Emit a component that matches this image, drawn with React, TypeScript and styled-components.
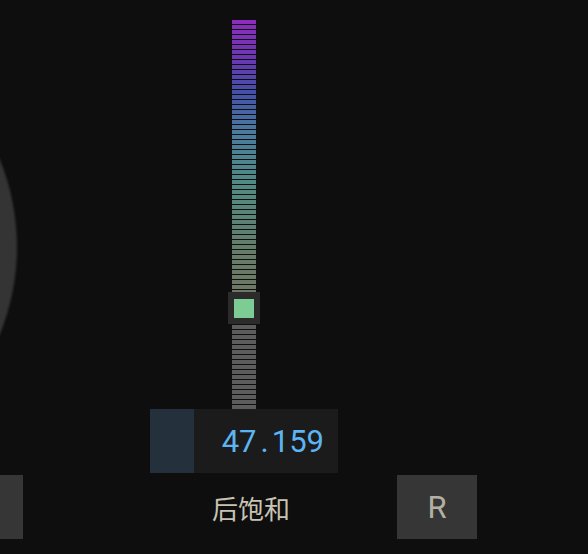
import React from "react";
import styled, { createGlobalStyle } from "styled-components";

const GlobalStyle = createGlobalStyle`
  html, body {
    margin: 0;
    padding: 0;
    background: #0e0e0e;
    overflow: hidden;
  }
`;

const BAR_COUNT = 78;
const ACTIVE_BARS = 55;

// colour stops down the lit part of the meter: [bar index, rgb]
const STOPS: [number, [number, number, number]][] = [
  [0, [0x8c, 0x2c, 0xbc]],
  [7, [0x6a, 0x36, 0xb2]],
  [14, [0x44, 0x50, 0xa8]],
  [22, [0x4a, 0x7a, 0x9e]],
  [32, [0x4f, 0x8a, 0x84]],
  [46, [0x66, 0x7b, 0x68]],
  [54, [0x6e, 0x77, 0x66]],
];

const barColor = (i: number) => {
  if (i >= ACTIVE_BARS) return "#5c5c5c";
  for (let s = 0; s < STOPS.length - 1; s++) {
    const [a, ca] = STOPS[s];
    const [b, cb] = STOPS[s + 1];
    if (i >= a && i <= b) {
      const t = (i - a) / (b - a);
      const c = ca.map((v, k) => Math.round(v + (cb[k] - v) * t));
      return `rgb(${c[0]}, ${c[1]}, ${c[2]})`;
    }
  }
  return "#6e7766";
};

const Page = styled.div`
  position: relative;
  width: 588px;
  height: 554px;
  overflow: hidden;
  background: #0e0e0e;
`;

// big rotary dial, mostly scrolled off the left edge
const Dial = styled.div`
  position: absolute;
  left: -445px;
  top: 16px;
  width: 462px;
  height: 462px;
  border-radius: 50%;
  background: #343434;
  filter: blur(1px);
`;

const Column = styled.div`
  position: relative;
  margin-left: 150px;
  width: 188px;
  padding-top: 20px;
  display: flex;
  flex-direction: column;
  align-items: center;
`;

const Track = styled.div`
  position: relative;
  width: 24px;
  display: flex;
  flex-direction: column;
  gap: 1px;
`;

const Bar = styled.div<{ $color: string }>`
  height: 4px;
  background: ${(p) => p.$color};
`;

const Handle = styled.div`
  position: absolute;
  top: 272px;
  left: -4px;
  width: 32px;
  height: 32px;
  background: #2b2b2b;
  display: flex;
  align-items: center;
  justify-content: center;
`;

const Thumb = styled.div`
  width: 20px;
  height: 19px;
  background: #7ccc94;
`;

const ValueBox = styled.div`
  width: 188px;
  height: 64px;
  display: flex;
  background: #1b1b1b;
`;

const Swatch = styled.div`
  width: 44px;
  background: #24303c;
`;

const Readout = styled.div`
  flex: 1;
  display: flex;
  align-items: center;
  justify-content: flex-end;
  padding-right: 14px;
  font-family: Roboto, "Liberation Sans", sans-serif;
  font-size: 31px;
  color: #5cb5f2;
`;

const Dot = styled.span`
  margin: 0 3px 0 4px;
`;

const BottomRow = styled.div`
  position: relative;
  margin-top: 2px;
  height: 64px;
  display: flex;
  align-items: stretch;
`;

const SideButton = styled.div`
  width: 23px;
  background: #363636;
`;

const Label = styled.div`
  width: 120px;
  margin-left: 168px;
  display: flex;
  align-items: center;
  justify-content: center;
  font-family: "Noto Sans CJK SC", "Noto Sans", sans-serif;
  font-size: 26px;
  color: #c8c4b4;
`;

const ResetButton = styled.div`
  width: 80px;
  margin-left: 86px;
  background: #363636;
  display: flex;
  align-items: center;
  justify-content: center;
  font-family: Roboto, "Liberation Sans", sans-serif;
  font-size: 31px;
  color: #b3b0a3;
`;

const App: React.FC = () => {
  const bars = Array.from({ length: BAR_COUNT }, (_, i) => barColor(i));
  return (
    <>
      <GlobalStyle />
      <Page>
        <Dial />
        <Column>
          <Track>
            {bars.map((c, i) => (
              <Bar key={i} $color={c} />
            ))}
            <Handle>
              <Thumb />
            </Handle>
          </Track>
          <ValueBox>
            <Swatch />
            <Readout>
              47<Dot>.</Dot>159
            </Readout>
          </ValueBox>
        </Column>
        <BottomRow>
          <SideButton />
          <Label>后饱和</Label>
          <ResetButton>R</ResetButton>
        </BottomRow>
      </Page>
    </>
  );
};

export default App;
